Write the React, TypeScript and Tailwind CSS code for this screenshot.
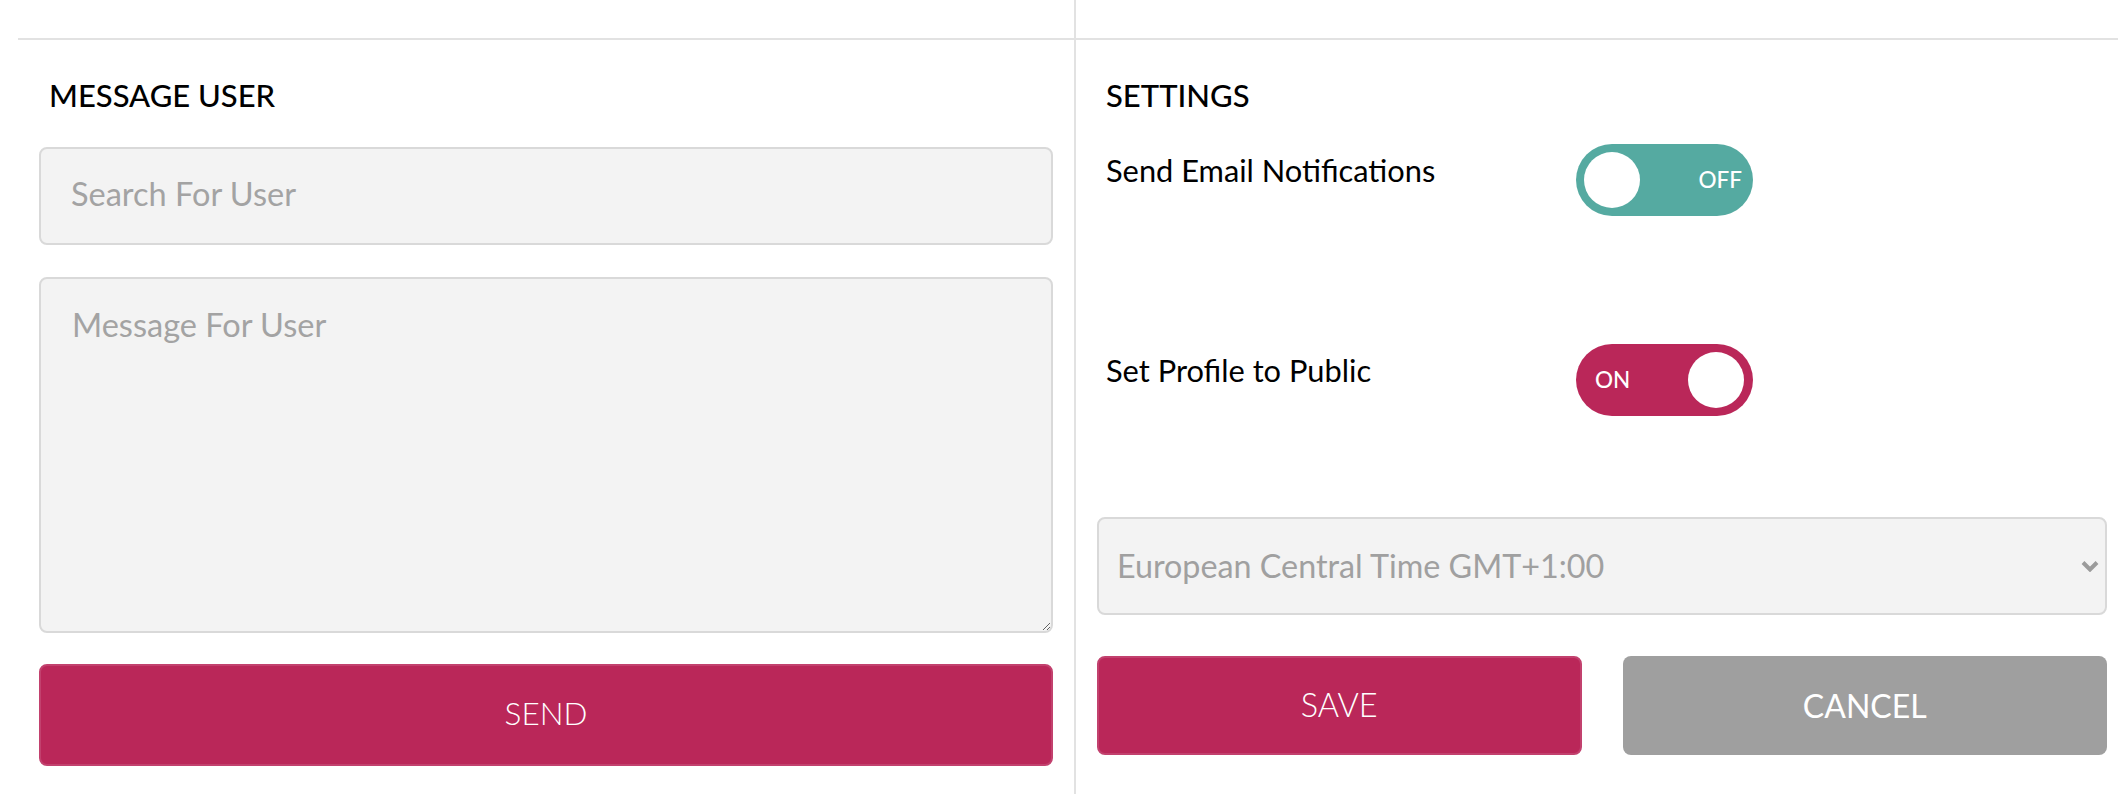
import React from "react";

function Toggle({ on }: { on: boolean }) {
  return (
    <button
      type="button"
      className={
        on
          ? "relative flex h-[72px] w-[177px] shrink-0 items-center rounded-full bg-[#ba2759] pl-[19px]"
          : "relative flex h-[72px] w-[177px] shrink-0 items-center justify-end rounded-full bg-[#55aaa1] pr-[11px]"
      }
    >
      <span className="text-[22.5px] font-medium leading-none text-white">{on ? "ON" : "OFF"}</span>
      <span
        className={
          on
            ? "absolute right-[9px] top-[8px] h-[56px] w-[56px] rounded-full bg-white"
            : "absolute left-[8px] top-[8px] h-[56px] w-[56px] rounded-full bg-white"
        }
      />
    </button>
  );
}

export default function App() {
  return (
    <div className="h-[794px] w-full overflow-hidden bg-white pl-[18px] font-['Lato',sans-serif] text-black">
      <div className="flex h-[38px]">
        <div className="w-[1056px]" />
        <div className="flex-1 border-l-2 border-[#e2e2e2]" />
      </div>
      <div className="h-[2px] bg-[#e2e2e2]" />
      <div className="flex h-[754px]">
        {/* Left: Message user */}
        <div className="flex w-[1056px] flex-col px-[21px] pt-[35px]">
          <h2 className="ml-[10px] text-[31px] font-medium leading-[40px]">MESSAGE USER</h2>
          <input
            type="text"
            placeholder="Search For User"
            className="mt-[32px] h-[98px] w-full rounded-[8px] border-2 border-[#d9d9d9] bg-[#f3f3f3] pb-[5px] pl-[30px] text-[32.5px] outline-none placeholder:text-[#a3a3a3]"
          />
          <textarea
            placeholder="Message For User"
            className="mt-[32px] h-[356px] w-full rounded-[8px] border-2 border-[#d9d9d9] bg-[#f3f3f3] pl-[31px] pt-[22px] text-[32.5px] leading-[48px] outline-none placeholder:text-[#a3a3a3]"
          />
          <button
            type="button"
            className="mt-[31px] h-[102px] w-full rounded-[8px] border-2 border-[#c2416e] bg-[#ba2759] pb-[3px] text-[31.5px] font-light text-white"
          >
            SEND
          </button>
        </div>

        {/* Right: Settings */}
        <div className="flex flex-1 flex-col border-l-2 border-[#e2e2e2] pl-[21px] pr-[11px] pt-[35px]">
          <h2 className="ml-[9px] text-[31px] font-medium leading-[40px]">SETTINGS</h2>

          <div className="mt-[29px] flex items-start">
            <span className="ml-[9px] w-[470px] text-[30.8px] leading-[54px]">Send Email Notifications</span>
            <Toggle on={false} />
          </div>

          <div className="mt-[128px] flex items-start">
            <span className="ml-[9px] w-[470px] text-[30.8px] leading-[54px]">Set Profile to Public</span>
            <Toggle on={true} />
          </div>

          <div className="relative mt-[101px]">
            <select
              defaultValue="cet"
              className="h-[98px] w-full appearance-none rounded-[8px] border-2 border-[#d9d9d9] bg-[#f3f3f3] pl-[18px] text-[32.3px] text-[#a0a0a0] outline-none"
            >
              <option value="cet">European Central Time GMT+1:00</option>
              <option value="gmt">Greenwich Mean Time GMT+0:00</option>
              <option value="eet">Eastern European Time GMT+2:00</option>
            </select>
            <svg
              className="pointer-events-none absolute right-[8px] top-[43px]"
              width="18"
              height="12"
              viewBox="0 0 18 12"
              fill="none"
            >
              <path d="M2 2.5 L9 9.5 L16 2.5" stroke="#9b9b9b" strokeWidth="4" strokeLinecap="butt" strokeLinejoin="miter" />
            </svg>
          </div>

          <div className="mt-[41px] grid grid-cols-2 gap-[41px]">
            <button
              type="button"
              className="h-[99px] rounded-[8px] border-2 border-[#c2416e] bg-[#ba2759] text-[32.5px] font-light text-white"
            >
              SAVE
            </button>
            <button
              type="button"
              className="h-[99px] rounded-[8px] bg-[#9f9f9f] text-[32px] text-white"
            >
              CANCEL
            </button>
          </div>
        </div>
      </div>
    </div>
  );
}
